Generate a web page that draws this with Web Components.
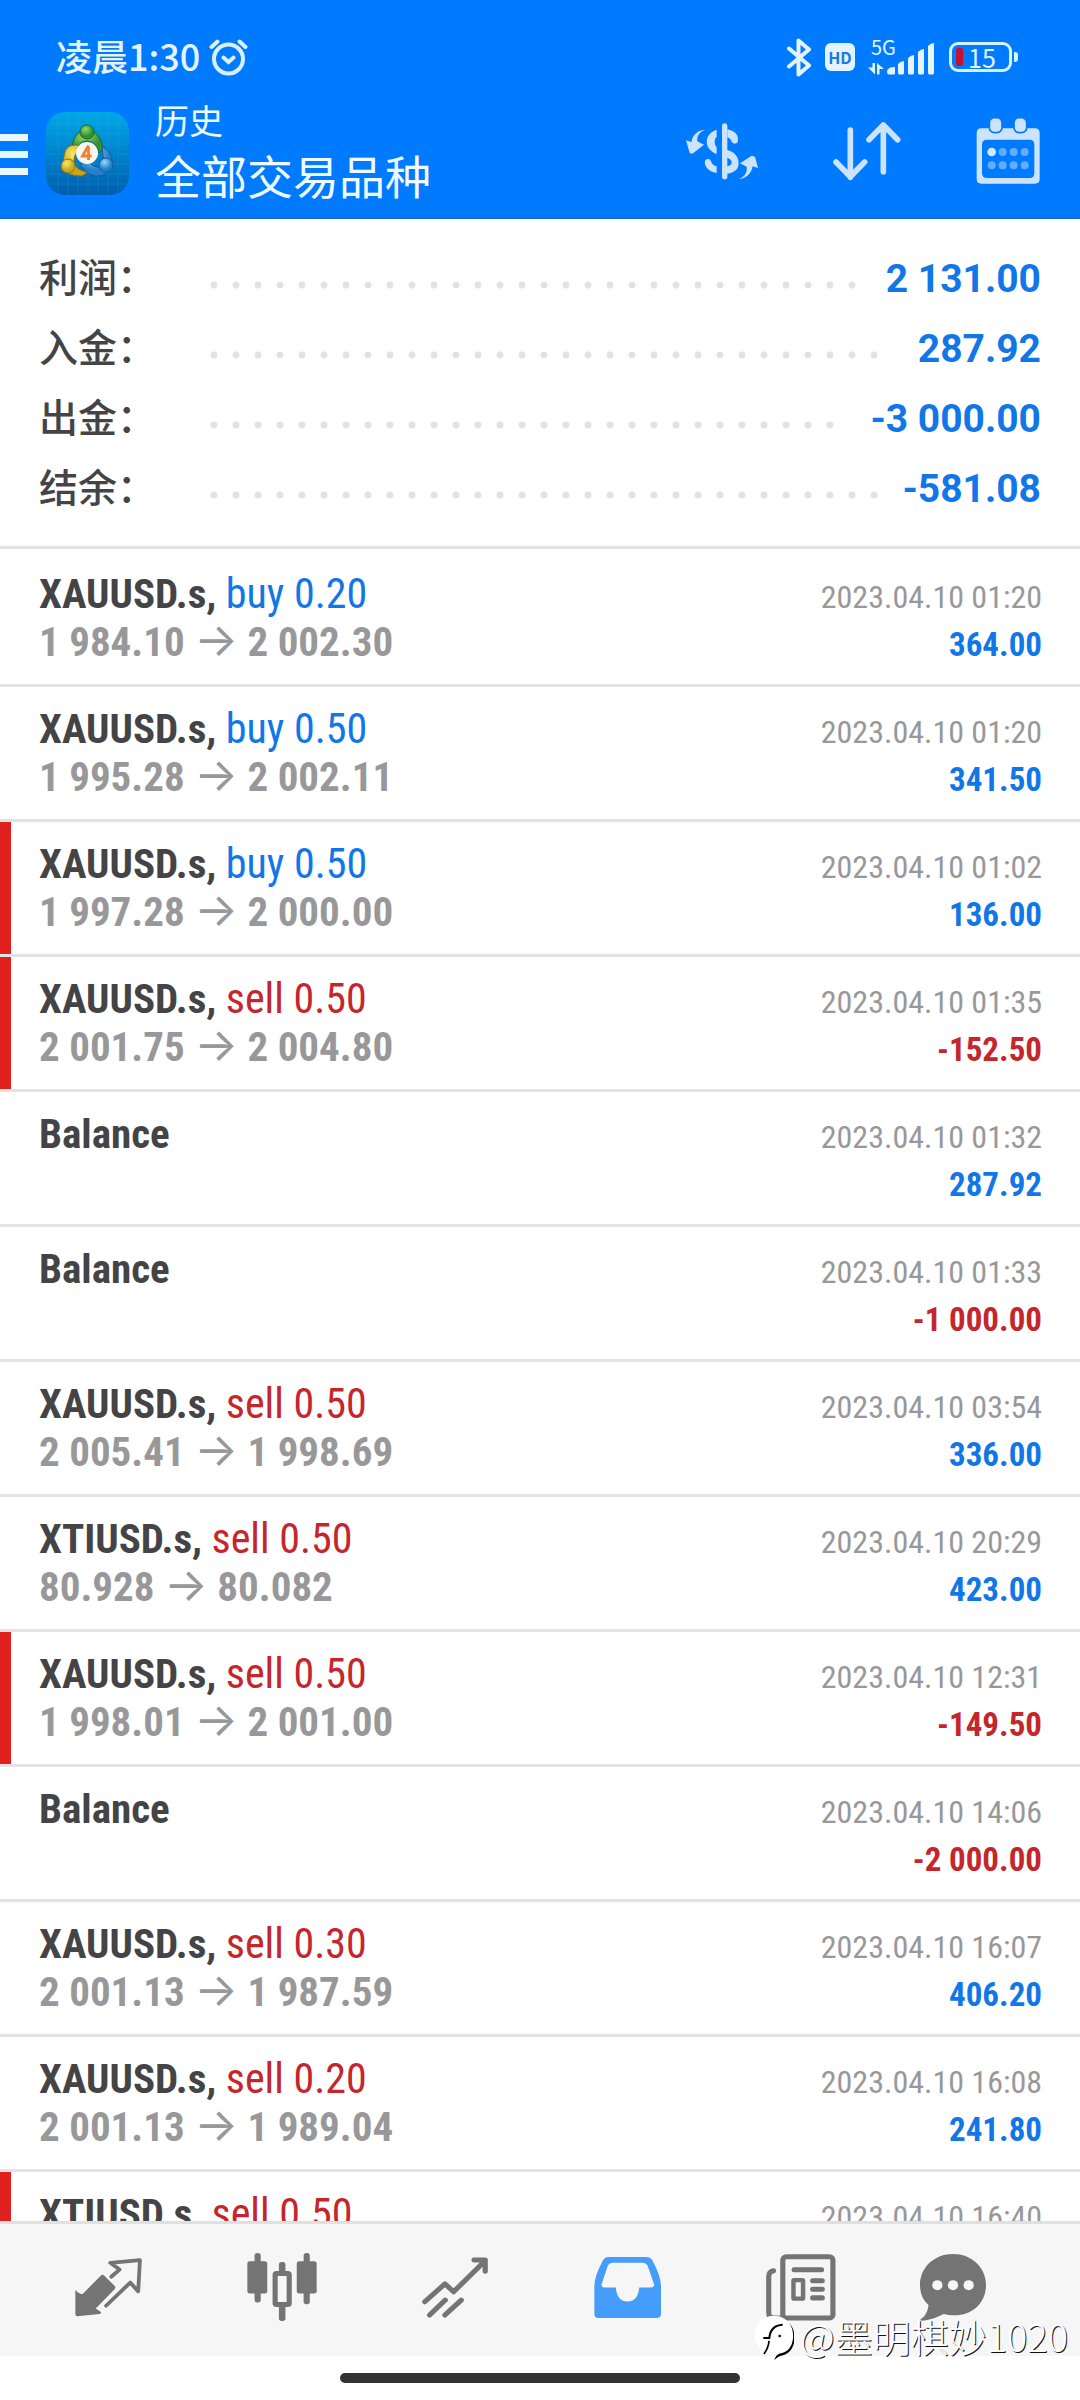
<!DOCTYPE html>
<html lang="zh-CN">
<head>
<meta charset="utf-8">
<meta name="viewport" content="width=device-width, initial-scale=1">
<title>历史</title>
<style>
  :root {
    --accent: #007aff;
    --gain: #1177e8;
    --loss: #c5262c;
    --ink: #444446;
    --muted: #98989a;
    --line: #e3e3e3;
    --side: 39px;
    --cjk: "Noto Sans CJK SC", sans-serif;
    --narrow: "Roboto Condensed", "Liberation Sans Narrow", Roboto, sans-serif;
  }
  body { margin: 0; background: #fff; font-family: Roboto, "Noto Sans CJK SC", sans-serif; }
</style>
</head>
<body>
<history-app></history-app>
<script>
const define = (name, html, setup) => {
  const template = document.createElement('template');
  template.innerHTML = html;
  customElements.define(name, class extends HTMLElement {
    connectedCallback() {
      if (this.shadowRoot) return;
      this.attachShadow({ mode: 'open' }).append(template.content.cloneNode(true));
      if (setup) setup(this, this.shadowRoot);
    }
  });
};

define('status-bar', `
<style>
  :host { display: flex; align-items: center; height: 98px; box-sizing: border-box; padding: 16px 62px 0 56px; color: #e4f4ff; }
  .time { font: 500 36px/48px var(--cjk); margin-bottom: 4px; }
  .alarm { margin-left: 9px; }
  .icons { margin-left: auto; display: flex; align-items: center; }
  svg { display: block; }
  .bt { margin-right: 14px; }
  .hd { margin-right: 13px; width: 30px; height: 28px; border-radius: 6px; background: #e4f4ff; color: #1a7ae8; font: 700 16px/28px var(--cjk); text-align: center; }
  .cell { display: grid; margin-right: 14px; }
  .gen { grid-area: 1 / 1; font: 400 20px/16px var(--cjk); padding-left: 3px; height: 16px; }
  .bars { grid-area: 1 / 1; }
  .battery { display: flex; align-items: center; gap: 5px; width: 63px; height: 30px; box-sizing: border-box; border: 3px solid #d5f2ff; border-radius: 9px; padding-left: 4px; font: 400 25px/24px var(--cjk); }
  .level { width: 7px; height: 18px; border-radius: 2px; background: #c8102e; }
  .nub { width: 4px; height: 10px; margin-left: 2px; border-radius: 0 3px 3px 0; background: #d5f2ff; }
</style>
<span class="time">凌晨1:30</span>
<svg class="alarm" width="39" height="37" viewBox="0 0 39 37" fill="none" stroke="#d8f0ff" stroke-width="4" stroke-linecap="round"><circle cx="19.500" cy="20" r="14.500"/><path d="M2.500 8 8.500 2.500M36.500 8l-6-5.500M14.500 18.500l5 4.500 5-4.500"/></svg>
<div class="icons">
  <svg class="bt" width="24" height="39" viewBox="0 0 24 39" fill="none" stroke="#e4f4ff" stroke-width="4" stroke-linejoin="round" stroke-linecap="round"><path d="M2 10.500 22 27.500 11.500 36.500V2.500L22 11.500 2 28.500"/></svg>
  <span class="hd">HD</span>
  <div class="cell">
    <span class="gen">5G</span>
    <svg class="bars" width="67" height="36" viewBox="0 0 67 36" fill="#e4f4ff"><path d="M4.500 24H7v11.500L0 28.500h4.500zM9 24l7 6h-4.500v5.500H9zM19 33q0-5 8-5v6.500q0 1-1 1h-5q-2 0-2-2.500zM30 25q3-3 6-3v12.500l-1 1h-4l-1-1zM40 19q3-3 6-3v18.500l-1 1h-4l-1-1zM50 13q3-3 6-3v24.500l-1 1h-4l-1-1zM60 7q3-3 6-3v30.500l-1 1h-4l-1-1z"/></svg>
  </div>
  <div class="battery"><span class="level"></span><span>15</span></div><span class="nub"></span>
</div>`);

define('app-header', `
<style>
  :host { display: block; background: var(--accent); color: #f0fbff; border-bottom: 2px solid #1a70c4; }
  .bar { display: flex; align-items: flex-start; height: 119px; padding-right: 40px; }
  button { border: 0; background: none; padding: 0; color: inherit; font: inherit; display: block; }
  svg { display: block; }
  .menu { margin-top: 36px; width: 28px; display: flex; flex-direction: column; gap: 10px; }
  .menu i { height: 7px; width: 28px; background: #e6f7ff; }
  .logo { margin: 14px 0 0 18px; }
  .titles { margin-left: 26px; }
  p, h1 { margin: 0; font-family: var(--cjk); font-weight: 400; }
  p { font-size: 34px; line-height: 44px; }
  h1 { font-size: 46px; line-height: 64px; }
  .tools { margin-left: auto; display: flex; gap: 75px; padding-top: 20px; }
  .tools button { height: 66px; display: flex; align-items: center; }
</style>
<status-bar></status-bar>
<div class="bar">
  <button class="menu" aria-label="menu"><i></i><i></i><i></i></button>
  <svg class="logo" width="83" height="83" viewBox="0 0 83 83">
    <defs>
      <linearGradient id="bg" x2="0" y2="1"><stop stop-color="#00a8e6"/><stop offset=".5" stop-color="#0083cc"/><stop offset="1" stop-color="#005dad"/></linearGradient>
      <radialGradient id="gr" cx=".4" cy=".3"><stop stop-color="#9cd868"/><stop offset="1" stop-color="#2f9238"/></radialGradient>
      <radialGradient id="ye" cx=".4" cy=".3"><stop stop-color="#f9ea6e"/><stop offset="1" stop-color="#cba61a"/></radialGradient>
      <radialGradient id="bl" cx=".4" cy=".3"><stop stop-color="#98daff"/><stop offset="1" stop-color="#2380cc"/></radialGradient>
    </defs>
    <rect width="83" height="83" rx="19" fill="url(#bg)"/>
    <path d="M12 0v83M22 0v83M32 0v83M42 0v83M52 0v83M62 0v83M72 0v83M0 12h83M0 22h83M0 32h83M0 42h83M0 52h83M0 62h83M0 72h83" stroke="#4cc4f0" stroke-opacity=".14"/>
    <path d="M26 36C27 24 33 18 41 18s15 7 16 19l-4 4q-3-12-12-12t-9 10z" fill="url(#gr)" stroke="#24632c"/>
    <path d="M31 33q-12-1-13 11l-1 9c1 8 8 11 19 11l6-4q-14-2-14-11 0-8 7-12z" fill="url(#ye)" stroke="#7b7218"/>
    <path d="M56 34q11 6 10 17c0 8-7 13-15 13-7 0-13-5-17-12l9-2q5 6 11 5 5-2 3-11z" fill="url(#bl)" stroke="#1a5990"/>
    <circle cx="41" cy="20" r="7" fill="url(#gr)" stroke="#24632c"/>
    <circle cx="22" cy="54" r="7" fill="url(#ye)" stroke="#8a7412"/>
    <circle cx="60" cy="53" r="7" fill="url(#bl)" stroke="#1a5990"/>
    <circle cx="41" cy="41" r="11" fill="#f7f7f2"/>
    <path d="M42.500 33.500 36.500 44h9M42.500 35v13" stroke="#f08030" stroke-width="2.800" fill="none"/>
  </svg>
  <div class="titles"><p>历史</p><h1>全部交易品种</h1></div>
  <div class="tools">
    <button aria-label="currency"><svg width="72" height="57" viewBox="78 369 216 171">
      <g fill="#cbe3fd"><rect x="186" y="370" width="16" height="168" rx="8"/>
      <path d="M136 389c-18 6-26 20-24 35l20 10-35 27-8-2-11-38 16 5c4-22 20-37 42-37z"/>
      <path d="M236 537c18-6 26-20 24-37l-20-10 35-23 10 3 9 34-16-5c-4 22-20 38-42 38z"/>
      <path d="M170 389v21c-8 6-8 22 0 32v20c-40-16-40-60 0-73zM170 519c-26-4-38-22-35-36 5-10 17-6 19 3 2 6 8 11 16 13z"/>
      <path d="M202 388c24 4 36 20 31 38-5 7-14 5-18-1-2-8-7-11-13-13z"/>
      <path fill-rule="evenodd" d="M198 449c24 4 38 20 38 40s-14 30-38 33v-22l4-1q13-3 13-12t-13-14l-4-1z"/></g></svg></button>
    <button aria-label="sort"><svg width="68" height="60" viewBox="514 368 204 180" fill="none" stroke="#cbe3fd" stroke-width="17" stroke-linecap="round" stroke-linejoin="round"><path d="M566 395v142M523 491l43 44 43-44M665 520V380M622 424l43-44 43 44"/></svg></button>
    <button aria-label="calendar"><svg width="64" height="66" viewBox="949 356 192 198">
      <path fill="#cbe3fd" fill-rule="evenodd" d="M965 387h161q14 0 14 14v138q0 14-14 14H965q-14 0-14-14V401q0-14 14-14zm17 34q-15 0-15 15v85q0 15 15 15h128q14 0 14-15v-85q0-15-14-15z"/>
      <g fill="#cbe3fd" stroke="#0a78f0" stroke-width="5"><rect x="989" y="355" width="38" height="45" rx="15"/><rect x="1063" y="355" width="38" height="45" rx="15"/></g>
      <circle cx="996" cy="458" r="13" fill="#cfeaff"/><g fill="#62aefb"><circle cx="1029" cy="458" r="12"/><circle cx="1062" cy="458" r="12"/><circle cx="1095" cy="458" r="12"/><circle cx="996" cy="498" r="12"/><circle cx="1029" cy="498" r="12"/><circle cx="1062" cy="498" r="12"/><circle cx="1095" cy="498" r="12"/></g></svg></button>
  </div>
</div>`);

define('summary-line', `
<style>
  :host { display: flex; align-items: flex-start; height: 70px; }
  .label { width: 164px; font: 500 39px/64px var(--cjk); color: var(--ink); }
  .dots { flex: 1; min-width: 0; height: 22px; margin: 31px 16px 0 0; display: flex; flex-wrap: wrap; overflow: hidden; }
  .dots i { width: 22px; height: 22px; background: radial-gradient(circle, #e2e2e2 3px, transparent 4px); }
  .value { font: 700 39px/72px Roboto, sans-serif; color: var(--gain); white-space: pre; }
</style>
<span class="label"><slot name="label"></slot></span><span class="dots" aria-hidden="true"></span><span class="value"><slot></slot></span>`,
(host, root) => {
  const dots = root.querySelector('.dots');
  for (let n = 0; n < 60; n++) dots.append(document.createElement('i'));
});

define('account-summary', `
<style>
  :host { display: block; padding: 24px var(--side) 23px; border-bottom: 3px solid var(--line); }
</style>
<slot></slot>`);

define('deal-row', `
<style>
  :host { display: grid; grid-template-columns: 1fr auto; align-content: start; height: 132px; box-sizing: content-box;
    padding: 0 38px 0 var(--side); border-bottom: 3px solid var(--line); font-family: var(--narrow); white-space: nowrap; }
  :host([marked]) { box-shadow: inset 11px 0 #e01f1f; }
  div { display: flex; align-items: baseline; justify-content: space-between; grid-column: 1 / 3; height: 48px; line-height: 48px; }
  .top { margin-top: 18px; }
  .symbol { font-size: 41px; font-weight: 700; color: var(--ink); }
  .order { font-size: 42px; }
  .price { font-size: 41px; font-weight: 700; color: var(--muted); }
  .price::before { content: "\\200b"; }
  .price b { font: 400 46px/1px Inter, sans-serif; }
  .date { font-size: 32px; color: var(--muted); }
  .amount { font-size: 33px; font-weight: 700; }
  .gain { color: var(--gain); } .loss { color: var(--loss); }
</style>
<div class="top"><span><span class="symbol"></span><span class="order"></span></span><span class="date"></span></div>
<div><span class="price"></span><span class="amount"></span></div>`,
(host, root) => {
  const get = (name) => host.getAttribute(name) || '';
  const put = (cls, text) => { const el = root.querySelector('.' + cls); el.textContent = text; return el; };
  const order = get('order');
  put('symbol', get('symbol') + (order ? ', ' : ''));
  put('order', order).classList.add(order.startsWith('buy') ? 'gain' : 'loss');
  put('date', get('date'));
  put('amount', get('amount')).classList.add(get('amount').startsWith('-') ? 'loss' : 'gain');
  if (get('open')) {
    const arrow = document.createElement('b');
    arrow.textContent = '→';
    put('price', get('open') + ' ').append(arrow, ' ' + get('close'));
  }
});

define('deal-list', `
<style>
  :host { display: block; flex: 1; min-height: 0; overflow: hidden; padding-top: 3px; }
</style>
<slot></slot>`);

define('tab-bar', `
<style>
  :host { display: grid; grid-template-columns: repeat(5, 173fr) 132fr; align-items: center; justify-items: center; height: 132px; padding: 0 61px 0 22px; background: #f6f6f6; border-top: 3px solid #e0e0e0; }
  button { border: 0; padding: 0; background: none; display: flex; align-items: center; height: 68px; margin-bottom: 6px; }
  svg { display: block; color: #747474; }
</style>
<button aria-label="行情"><svg width="67" height="60" viewBox="218 326 194 176" preserveAspectRatio="none"><path fill="currentColor" d="M219 422q14 16 22 12l52-54q5-4 10 1l30 30q4 5-1 10l-54 56 13 9q6 5-2 7l-64 7q-6 0-6-6z"/><path d="M323 384l24-21-27-20 86-8-5 92-23-26-70 68" fill="none" stroke="currentColor" stroke-width="11" stroke-linejoin="round" stroke-linecap="round"/></svg></button>
<button aria-label="图表"><svg width="70" height="68" viewBox="714 311 204 206" preserveAspectRatio="none" fill="currentColor"><rect x="736" y="311" width="18" height="150" rx="8"/><rect x="715" y="336" width="58" height="98" rx="7"/><rect x="879" y="311" width="18" height="155" rx="8"/><rect x="859" y="336" width="58" height="98" rx="7"/><rect x="807" y="338" width="19" height="179" rx="8"/><rect x="796" y="373" width="41" height="94" rx="4" fill="#f6f6f6" stroke="currentColor" stroke-width="15"/></svg></button>
<button aria-label="交易"><svg width="66" height="61" viewBox="1223 319 190 184" preserveAspectRatio="none" fill="none" stroke="currentColor" stroke-width="15" stroke-linecap="round" stroke-linejoin="round"><path d="M1231 454l58-54 25 24 90-93M1373 328h32v34M1245 494l45-45M1289 494l47-45"/></svg></button>
<button aria-label="历史" aria-current="page"><svg width="67" height="61" viewBox="157 320 194 182" preserveAspectRatio="none"><path fill="#449cfb" fill-rule="evenodd" d="M200 320h108q12 0 18 10 25 48 25 78v82q0 12-12 12H170q-12 0-12-12v-82q0-30 25-78 6-10 17-10zm11 17q-10 0-14 8l-18 56q-2 9 7 10h34q4 42 34 42t34-42h34q11-1 9-10l-19-56q-4-8-14-8z"/></svg></button>
<button aria-label="新闻"><svg width="70" height="67" viewBox="656 311 204 200" preserveAspectRatio="none" fill="none" stroke="currentColor" stroke-width="15" stroke-linecap="round" stroke-linejoin="round"><rect x="705" y="319" width="146" height="183" rx="10"/><path d="M678 361q-14 3-14 17v109q0 15 15 15h30M738 358h80M792 391h28M792 416h28M792 442h28"/><rect x="736" y="389" width="28" height="55" rx="2" stroke-width="13"/></svg></button>
<button aria-label="信箱"><svg width="66" height="67" viewBox="1102 311 194 200" preserveAspectRatio="none"><path fill="currentColor" d="M1199 311c55 0 97 40 97 92 0 56-42 91-92 91-12 0-23-2-33-4-18 9-40 20-66 20q-3-2-1-4c14-10 21-24 23-43-17-15-25-35-25-60 0-52 42-92 97-92z"/><g fill="#f6f6f6"><circle cx="1153" cy="404" r="15"/><circle cx="1199" cy="404" r="15"/><circle cx="1245" cy="404" r="15"/></g></svg></button>`);

define('home-indicator', `
<style>
  :host { display: flex; justify-content: center; height: 44px; box-sizing: border-box; padding-top: 17px; background: #fff; }
  i { width: 37%; height: 10px; border-radius: 5px; background: #333; }
</style><i></i>`);

define('user-watermark', `
<style>
  :host { position: absolute; right: 12px; bottom: 36px; display: flex; align-items: center; gap: 6px; color: #fff; font: 300 38px/56px var(--cjk); text-shadow: 1px 1px 0 #111; }
  svg { display: block; margin-top: 5px; }
</style>
<svg width="40" height="46" viewBox="38 58 120 138"><circle cx="98" cy="115" r="58" fill="#fff"/><path d="M66 124h18q3-38 40-40" fill="none" stroke="#000" stroke-width="6"/><path d="M68 172q14-20 15-40" fill="none" stroke="#000" stroke-width="5"/><path d="M143 78c22 30 14 82-18 90-16 3-20 6-27 24 10-12 18-13 27-16 38-10 46-68 18-98z"/><circle cx="115" cy="118" r="4"/></svg>
<span>@墨明棋妙1020</span>`);

define('history-app', `
<style>
  :host { display: flex; flex-direction: column; height: 100vh; position: relative; overflow: hidden; background: #fff; }
</style>
<app-header></app-header>
<account-summary>
  <summary-line><span slot="label">利润：</span>2 131.00</summary-line>
  <summary-line><span slot="label">入金：</span>287.92</summary-line>
  <summary-line><span slot="label">出金：</span>-3 000.00</summary-line>
  <summary-line><span slot="label">结余：</span>-581.08</summary-line>
</account-summary>
<deal-list>
  <deal-row symbol="XAUUSD.s" order="buy 0.20" open="1 984.10" close="2 002.30" date="2023.04.10 01:20" amount="364.00"></deal-row>
  <deal-row symbol="XAUUSD.s" order="buy 0.50" open="1 995.28" close="2 002.11" date="2023.04.10 01:20" amount="341.50"></deal-row>
  <deal-row marked symbol="XAUUSD.s" order="buy 0.50" open="1 997.28" close="2 000.00" date="2023.04.10 01:02" amount="136.00"></deal-row>
  <deal-row marked symbol="XAUUSD.s" order="sell 0.50" open="2 001.75" close="2 004.80" date="2023.04.10 01:35" amount="-152.50"></deal-row>
  <deal-row symbol="Balance" date="2023.04.10 01:32" amount="287.92"></deal-row>
  <deal-row symbol="Balance" date="2023.04.10 01:33" amount="-1 000.00"></deal-row>
  <deal-row symbol="XAUUSD.s" order="sell 0.50" open="2 005.41" close="1 998.69" date="2023.04.10 03:54" amount="336.00"></deal-row>
  <deal-row symbol="XTIUSD.s" order="sell 0.50" open="80.928" close="80.082" date="2023.04.10 20:29" amount="423.00"></deal-row>
  <deal-row marked symbol="XAUUSD.s" order="sell 0.50" open="1 998.01" close="2 001.00" date="2023.04.10 12:31" amount="-149.50"></deal-row>
  <deal-row symbol="Balance" date="2023.04.10 14:06" amount="-2 000.00"></deal-row>
  <deal-row symbol="XAUUSD.s" order="sell 0.30" open="2 001.13" close="1 987.59" date="2023.04.10 16:07" amount="406.20"></deal-row>
  <deal-row symbol="XAUUSD.s" order="sell 0.20" open="2 001.13" close="1 989.04" date="2023.04.10 16:08" amount="241.80"></deal-row>
  <deal-row marked symbol="XTIUSD.s" order="sell 0.50" date="2023.04.10 16:40"></deal-row>
</deal-list>
<tab-bar></tab-bar>
<home-indicator></home-indicator>
<user-watermark></user-watermark>`);
</script>
</body>
</html>
